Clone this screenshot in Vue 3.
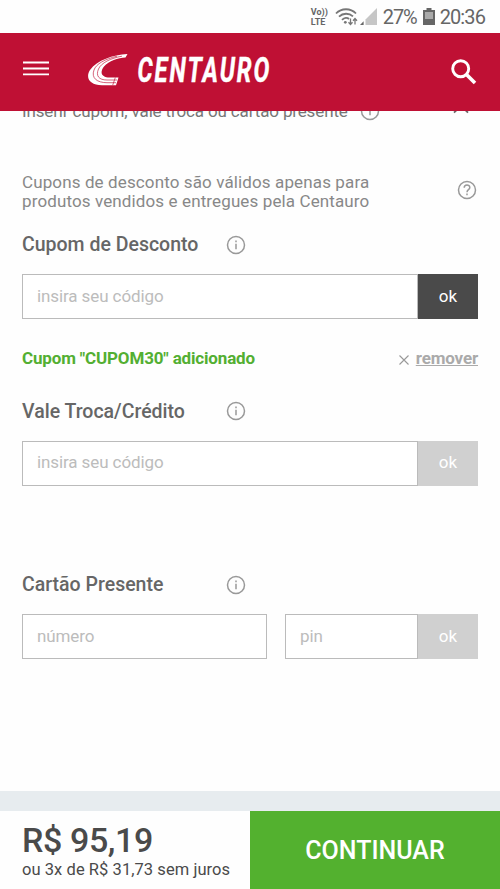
<script setup>
import { ref } from 'vue'

const cupom = ref('')
const vale = ref('')
const numero = ref('')
const pin = ref('')
</script>

<template>
  <div class="screen">
    <div class="status">
      <div class="volte"><span>Vo))</span><span>LTE</span></div>
      <svg class="wifi" width="24" height="20" viewBox="0 0 24 20" fill="none" stroke="#777" stroke-width="1.8">
        <path d="M1 6.500C6.500 .8 15.500 .8 21 6.500" />
        <path d="M4 9.700C8 5.800 14 5.800 18 9.400" />
        <path d="M7 12.800C9.500 10.300 12.300 10.300 14 12" />
        <circle cx="10.300" cy="15.300" r="1.400" fill="#777" stroke="none" />
        <path d="M15.500 11.500v6M13.500 15.300l2 2.200 2-2.200M20 17.500v-6M18 13.700l2-2.200 2 2.200" stroke-width="1.300" />
      </svg>
      <svg class="signal" width="17" height="17" viewBox="0 0 17 17">
        <path d="M17 0V17H5.500V11.500Z" fill="#c6c6c6" />
        <path d="M3.600 13.300V17H0Z" fill="#666" />
      </svg>
      <span class="pct">27%</span>
      <svg class="battery" width="12" height="17" viewBox="0 0 12 17">
        <path d="M3.500 0h5v2H12v15H0V2h3.500Z" fill="#666" />
        <path d="M2 4h8v7H2Z" fill="#aaa" />
      </svg>
      <span class="clock">20:36</span>
    </div>

    <header class="header">
      <svg class="menu" width="26" height="15" viewBox="0 0 26 15">
        <path d="M0 1.500h26M0 7.500h26M0 13.300h26" stroke="#fff" stroke-width="1.800" />
      </svg>
      <svg class="logo" width="192" height="50" viewBox="0 -5 192 50">
        <path d="M40.500 4C26 5 10 10 3 20C-2 28 3 35 15 35.200H29L31.500 27.500H24C15 28 12 23 17 16.500C22 10.500 31 8 38.500 7.500Z" fill="#fff" />
        <path d="M35 6.200C24 8 14 13 11.500 19C8.500 26 12 30 20 30H30M30 6.200C18 9 9 14 7 20C4 28 10 32.700 20 32.700H29M28.300 27.500L25.700 35.200" fill="none" stroke="#bf1034" stroke-width=".65" />
        <text x="50.500" y="31.800" textLength="134" lengthAdjust="spacingAndGlyphs" class="wordmark">CENTAURO</text>
      </svg>
      <svg class="search" width="26" height="26" viewBox="0 0 26 26" fill="none" stroke="#fff">
        <circle cx="9.700" cy="9.700" r="8" stroke-width="2.900" />
        <path d="M15.700 15.700l8.300 8.300" stroke-width="3.600" />
      </svg>
    </header>

    <main class="content">
      <div class="toggle">
        <span class="toggle-text">Inserir cupom, vale troca ou cartão presente</span>
        <svg class="info" width="20" height="20" viewBox="0 0 20 20"><circle cx="10" cy="10" r="8.500" /><path d="M10 8.800v5.500M10 5.500v1.800" /></svg>
        <svg class="chevron" width="18" height="11" viewBox="0 0 18 11"><path d="M2 9.700l7-7 7 7" fill="none" stroke="#666" stroke-width="1.800" /></svg>
      </div>

      <div class="notice">
        <p>Cupons de desconto são válidos apenas para<br><span>produtos vendidos e entregues pela Centauro</span></p>
        <svg class="info" width="20" height="20" viewBox="0 0 20 20"><circle cx="10" cy="10" r="8.500" /><path d="M7.200 7.800c0-3.800 5.600-3.600 5.600-.3 0 2.200-2.800 2.200-2.800 4.700M10 13.500v1.700" /></svg>
      </div>

      <section class="block">
        <div class="heading">
          <h2>Cupom de Desconto</h2>
          <svg class="info" width="20" height="20" viewBox="0 0 20 20"><circle cx="10" cy="10" r="8.500" /><path d="M10 8.800v5.500M10 5.500v1.800" /></svg>
        </div>
        <div class="field">
          <input v-model="cupom" placeholder="insira seu código">
          <button class="ok active">ok</button>
        </div>
        <div class="applied">
          <strong>Cupom "CUPOM30" adicionado</strong>
          <svg width="10" height="10" viewBox="0 0 10 10"><path d="M.5 .5l9 9M9.500 .5l-9 9" stroke="#999" stroke-width="1.100" /></svg>
          <a>remover</a>
        </div>
      </section>

      <section class="block vale">
        <div class="heading">
          <h2>Vale Troca/Crédito</h2>
          <svg class="info" width="20" height="20" viewBox="0 0 20 20"><circle cx="10" cy="10" r="8.500" /><path d="M10 8.800v5.500M10 5.500v1.800" /></svg>
        </div>
        <div class="field">
          <input v-model="vale" placeholder="insira seu código">
          <button class="ok">ok</button>
        </div>
      </section>

      <section class="block">
        <div class="heading">
          <h2>Cartão Presente</h2>
          <svg class="info" width="20" height="20" viewBox="0 0 20 20"><circle cx="10" cy="10" r="8.500" /><path d="M10 8.800v5.500M10 5.500v1.800" /></svg>
        </div>
        <div class="field">
          <input v-model="numero" class="numero" placeholder="número">
          <input v-model="pin" placeholder="pin">
          <button class="ok">ok</button>
        </div>
      </section>
    </main>

    <div class="band"></div>
    <footer class="footer">
      <div class="total">
        <div class="price">R$ 95,19</div>
        <div class="parcel">ou 3x de R$ 31,73 sem juros</div>
      </div>
      <button class="continue"><span>CONTINUAR</span></button>
    </footer>
  </div>
</template>

<style>
body { margin: 0; background: #fff; }
</style>

<style scoped>
.screen { width: 500px; height: 889px; overflow: hidden; display: flex; flex-direction: column; font-family: Roboto, "Liberation Sans", sans-serif; background: #fefefe; color: #666; }
.status { flex: none; height: 33px; box-sizing: border-box; display: flex; align-items: center; justify-content: flex-end; padding-right: 15px; font-size: 20px; color: #666; white-space: nowrap; }
.volte { display: flex; flex-direction: column; font-size: 9px; font-weight: 700; line-height: 10px; margin-right: 7px; }
.wifi { margin-right: 1px; }
.signal { margin-right: 6px; }
.pct { letter-spacing: -1.100px; margin-right: 6px; }
.battery { margin-right: 5px; }
.clock { letter-spacing: -.9px; }

.header { flex: none; height: 78px; box-sizing: border-box; display: flex; align-items: center; padding: 0 23px; background: #bf1034; }
.menu { margin: -8px 38px 0 0; }
.logo { margin-top: -4px; }
.wordmark { font: italic 700 35px Roboto, sans-serif; letter-spacing: 3px; fill: #fff; stroke: #fff; stroke-width: .5px; }
.search { margin-left: auto; }

.content { flex: 1; min-height: 0; overflow: hidden; padding: 0 22px; }
.info { flex: none; fill: none; stroke: #999; stroke-width: 1.500; }
.toggle { height: 24px; margin-top: -12px; display: flex; align-items: center; font-size: 17px; letter-spacing: -.14px; color: #777; }
.toggle-text { width: 338px; white-space: nowrap; }
.chevron { margin: -6px 8px 0 auto; }
.notice { height: 39px; margin-top: 50px; display: flex; align-items: center; justify-content: space-between; padding-right: 1px; }
.notice .info { margin-top: -5px; }
.notice p { margin: -1px 0 0; font-size: 17px; line-height: 19.500px; letter-spacing: .12px; color: #888; white-space: nowrap; }
.heading { height: 24px; display: flex; align-items: center; }
h2 { margin: 0; width: 204px; font-size: 19.500px; font-weight: 500; color: #666; white-space: nowrap; }
.block { padding-top: 20.500px; }
.field { margin-top: 17.500px; height: 45px; display: flex; }
input { flex: 1; min-width: 0; box-sizing: border-box; height: 45px; border: 1.500px solid #bbb; border-right-width: 1px; border-radius: 0; padding: 0 14px 2px; font: 17px Roboto, sans-serif; letter-spacing: -.1px; background: #fff; outline: none; }
input::placeholder { color: #bcbcbc; opacity: 1; }
.numero { flex: none; width: 245px; margin-right: 18px; }
.ok { width: 60px; height: 45px; border: 0; padding: 0 0 2px; background: #d0d0d0; color: #fff; font: 17px Roboto, sans-serif; }
.ok.active { background: #4a4a4a; }
.applied { height: 24px; margin-top: 27px; display: flex; align-items: center; font-size: 17px; letter-spacing: -.16px; white-space: nowrap; }
.applied strong { color: #53af32; font-weight: 700; }
.applied svg { margin: 3px 7px 0 auto; }
.applied a { color: #aaa; font-weight: 700; text-decoration: underline; }
.vale { padding-top: 29px; height: 153px; box-sizing: border-box; margin-bottom: 29px; }

.band { flex: none; height: 20px; background: #e7ecef; }
.footer { flex: none; height: 78px; display: flex; }
.total { width: 250px; box-sizing: border-box; padding-left: 22px; color: #4a4a4a; white-space: nowrap; }
.price { font-size: 34px; font-weight: 500; letter-spacing: -.4px; line-height: 40px; margin-top: 9px; }
.parcel { font-size: 16.500px; letter-spacing: .06px; line-height: 20px; }
.continue { width: 250px; border: 0; padding: 0; background: #53b12f; color: #fff; font: 500 25px Roboto, sans-serif; }
</style>
